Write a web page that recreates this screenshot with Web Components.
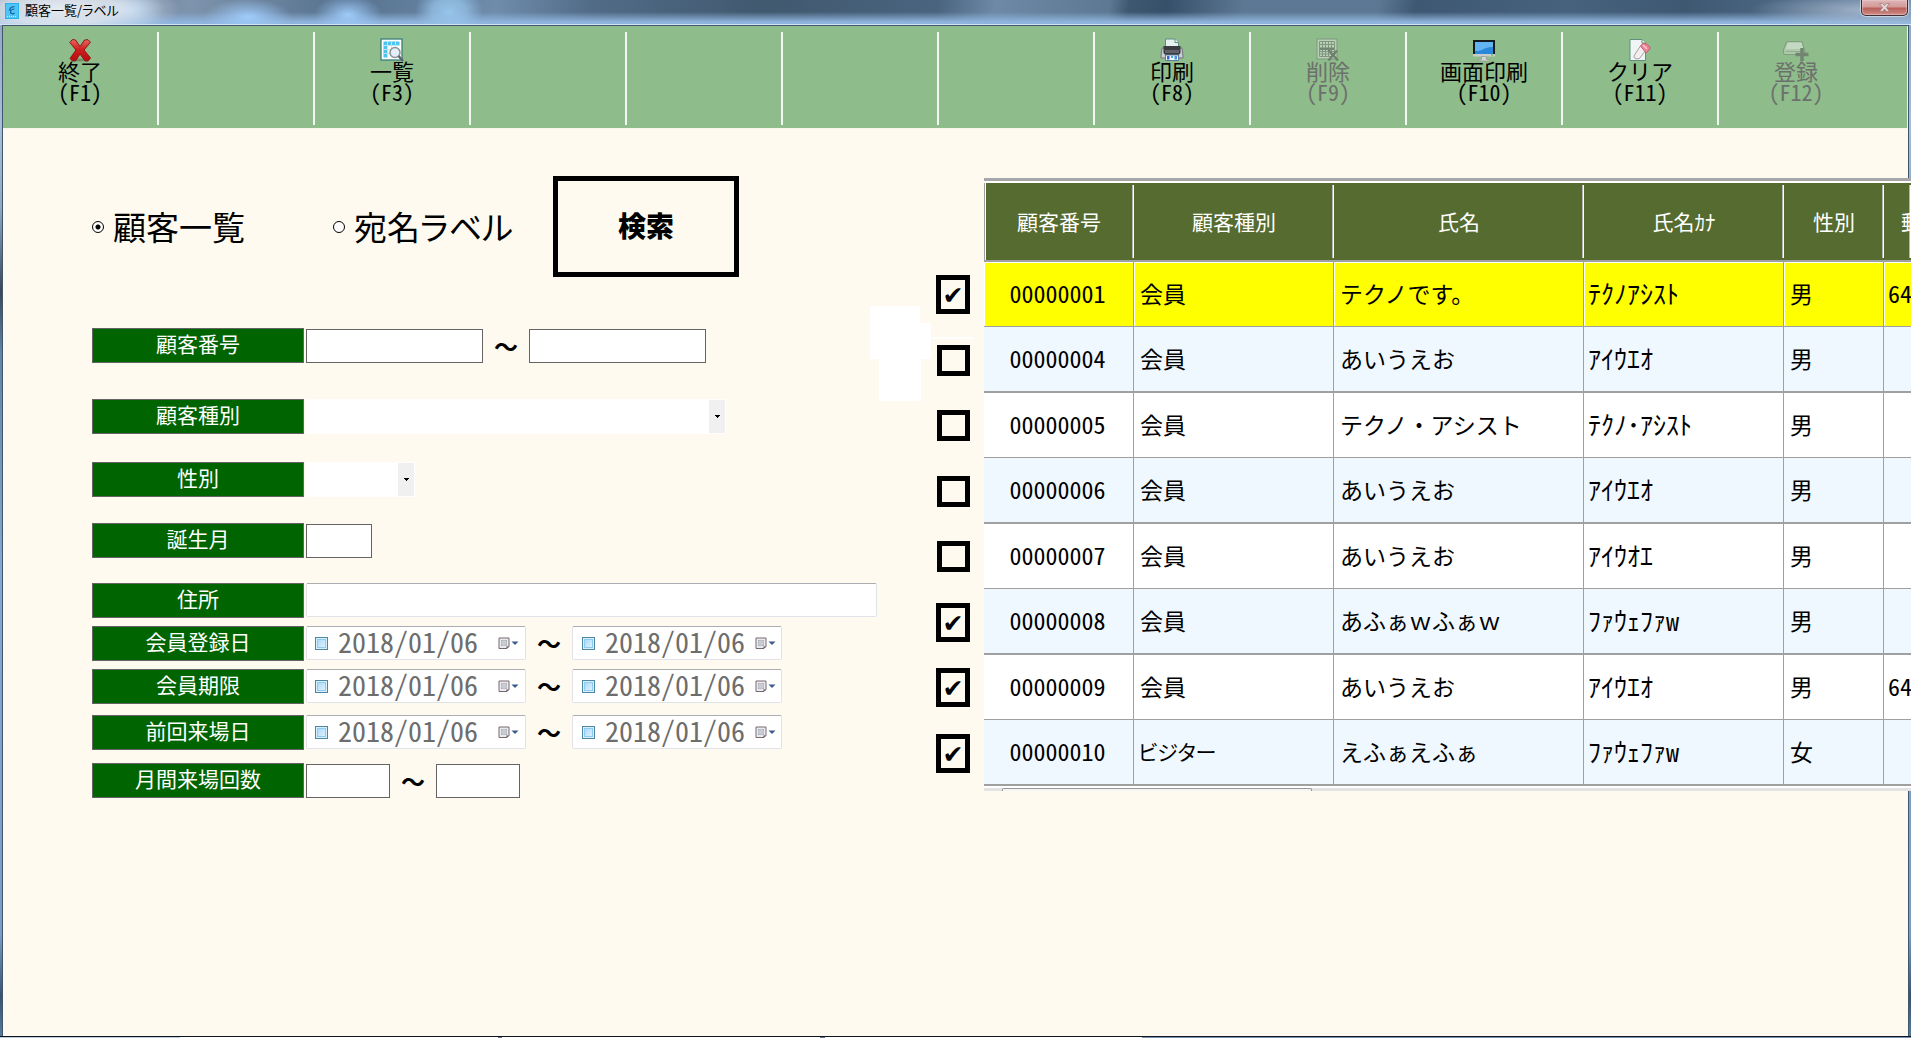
<!DOCTYPE html>
<html lang="ja">
<head>
<meta charset="utf-8">
<title>顧客一覧/ラベル</title>
<style>
html, body { margin: 0; height: 100%; overflow: hidden; }
body { font-family: "Noto Sans CJK JP", "Liberation Sans", sans-serif; color: #000; }
</style>
</head>
<body>
<app-window caption="顧客一覧/ラベル">
  <tool-bar slot="toolbar">
    <tool-button icon="exit" key="F1">終了</tool-button>
    <tool-button></tool-button>
    <tool-button icon="list" key="F3">一覧</tool-button>
    <tool-button></tool-button>
    <tool-button></tool-button>
    <tool-button></tool-button>
    <tool-button></tool-button>
    <tool-button icon="print" key="F8">印刷</tool-button>
    <tool-button icon="delete" key="F9" disabled>削除</tool-button>
    <tool-button icon="screen" key="F10">画面印刷</tool-button>
    <tool-button icon="clear" key="F11">クリア</tool-button>
    <tool-button icon="save" key="F12" disabled>登録</tool-button>
  </tool-bar>
  <search-form></search-form>
  <row-picker></row-picker>
  <customer-grid></customer-grid>
</app-window>

<script>
class BaseElement extends HTMLElement {
  render(html, options = {}) {
    const root = this.attachShadow({ mode: 'open', ...options });
    const t = document.createElement('template');
    t.innerHTML = html;
    root.appendChild(t.content.cloneNode(true));
    return root;
  }
}

const ICONS = {
  exit: `<svg width="24" height="24" viewBox="0 0 24 24"><defs><linearGradient id="g" x1="0" y1="0" x2="0" y2="1"><stop offset="0" stop-color="#e86a62"/><stop offset=".45" stop-color="#d01f1f"/><stop offset="1" stop-color="#b80d10"/></linearGradient></defs><ellipse cx="12" cy="22" rx="9" ry="1.5" fill="#4d6b4a" opacity=".5"/><path d="M4.500 1.500 7.500 2l4.500 6.500L16.500 2l3.500-.3 2.500 2.500-6.500 7.800 6.500 8-2.500 3h-3L12 16l-4.500 7H4.500L2 20.500 8 12 1.800 4.500z" fill="url(#g)" stroke="#8f1515" stroke-width="1" stroke-linejoin="round"/></svg>`,
  list: `<svg width="24" height="24" viewBox="0 0 24 24"><rect x="1" y="1" width="21" height="21" fill="#fdfefe" stroke="#3d7f78" stroke-width="1.300"/><path d="M3.500 3.500h16v4h-12v12h-4z" fill="#4cc4f2"/><path d="M7.500 7.500h12v12h-12z" fill="#fff"/><path d="M3.500 7.500h16M3.500 11.500h16M3.500 15.500h16M7.500 3.500v16M11.500 3.500v16M15.500 3.500v16" stroke="#bfe6ee" stroke-width="1"/><circle cx="15" cy="14.500" r="5" fill="#e3eef8" fill-opacity=".9" stroke="#8d9399" stroke-width="1.500"/><path d="m18.500 18 4.500 5" stroke="#5d646b" stroke-width="2.400"/></svg>`,
  print: `<svg width="24" height="24" viewBox="0 0 24 24"><path d="M5.500 1h9.500l3.500 3.500V10h-13z" fill="#e6f1ef" stroke="#5f8a80"/><path d="M15 1v3.500h3.500" fill="#fff" stroke="#5f8a80"/><path d="M2 10h20l1 8v2H1v-2z" fill="#c9cdd3" stroke="#70757c"/><path d="M3.500 8h17v7l-2 2h-13l-2-2z" fill="#3b3b40"/><path d="M5 12h14v3H5z" fill="#626269"/><path d="M5.500 17h13v5.500h-13z" fill="#f6f9fe" stroke="#597d9d"/><path d="M7 18h2.500v3.500H7z" fill="#3565c8"/><path d="M11 18h2v2h-2z" fill="#35b5d0"/><path d="M14.500 18H17v3.500h-2.500z" fill="#4b8ee8"/></svg>`,
  delete: `<svg width="24" height="24" viewBox="0 0 24 24"><rect x="1" y="1" width="20" height="20" fill="#b8d0b6" stroke="#82a081" stroke-width="1.200"/><path d="M3.500 3.500h15v15h-15zM3.500 6.500h15M3.500 13.500h15M3.500 16h15M6.500 3.500v15M9.500 3.500v15M12.500 3.500v15M15.500 3.500v15" stroke="#81967f" fill="none"/><path d="M4 9.500h14v2.500H4z" fill="#748673"/><path d="m12.500 12 9.500 10.500M21 12.500l-8.500 10" stroke="#6d806c" stroke-width="2.400"/></svg>`,
  screen: `<svg width="24" height="24" viewBox="0 0 24 24"><rect x="1" y="2" width="22" height="16" fill="#151a1d"/><rect x="3" y="4" width="18" height="12" fill="#2789d8"/><path d="M3 4h18v5C14 8 9 14 3 13z" fill="#62b5f0"/><path d="M1 16h22v2.500H1z" fill="#c7cdca"/><path d="M19 16.500h2v1h-2z" fill="#39c52e"/><path d="M9.500 18.500h5v3h3v1.500h-11v-1.500h3z" fill="#d3d6d6" stroke="#8a9090" stroke-width=".6"/></svg>`,
  clear: `<svg width="24" height="24" viewBox="0 0 24 24"><path d="M2 1.500h12l3.500 3.500v17.500H2z" fill="#eef5f4" stroke="#5c8f7e"/><path d="M14 1.500V5h3.500" fill="#fff" stroke="#5c8f7e"/><path d="m6.500 17 6-9 5 4.500-6 8q-3 1-5-.5-1-1.500 0-3z" fill="#f3eef0" stroke="#99888e" stroke-width=".8"/><path d="m12.500 8 2-2.500q4-1 7.500 3.500v2l-4 4z" fill="#ee8296" stroke="#b95469" stroke-width=".8"/><path d="m15 7 4 4" stroke="#fbc6ce" stroke-width="1.500"/></svg>`,
  save: `<svg width="28" height="24" viewBox="0 0 28 24"><path d="M5 3.500h15l2.500 8V15q-.5 1.500-2 1.500H3Q1.500 16.500 1.500 15v-3.500z" fill="#afc9ad" stroke="#82a081" stroke-width="1.200"/><path d="M5.500 5h14l1.500 6H3.500z" fill="#c3d9c1"/><path d="M3.500 13.500h17" stroke="#8fae8d"/><path d="M20 10v13M13.500 16.500h13" stroke="#728571" stroke-width="3.500"/></svg>`
};

class AppWindow extends BaseElement {
  connectedCallback() {
    this.render(`
      <style>
        :host { display: flex; flex-direction: column; height: 100vh;
          background: linear-gradient(#8ea3bd 0%, #a9bfd6 12%, #93a9c2 20%, #3a4756 28%, #6484a4 34%, #86a8cc 55%, #7c9cc2 90%, #38536f 96%, #5b7c9c); }
        header { display: flex; align-items: flex-start; height: 24px; border-bottom: 1px solid #d3e4f3; box-sizing: content-box;
          background:
            radial-gradient(120px 30px at 60px 9px, #e6ebf1, #e6ebf1cc 50%, #e6ebf100),
            radial-gradient(34px 20px at 130px 10px, #9dc6f0, #9dc6f000),
            radial-gradient(44px 18px at 248px 17px, #9fcbfa, #9fcbfa00),
            radial-gradient(34px 20px at 348px 15px, #9fcbfa, #9fcbfa00),
            radial-gradient(34px 26px at 449px 12px, #97c3ea, #97c3eabb 50%, #97c3ea00),
            radial-gradient(120px 18px at 1870px 10px, #b5c5dacc, #b5c5da00),
            linear-gradient(#8fb4dd00 50%, #8fb4dd 92%),
            linear-gradient(100deg, #5b7592 0%, #7e93ac 10%, #56728f 18%, #6f8cab 26%, #516b87 31%, #41596f 40%, #4a647f 49%, #6d89a6 52%, #5c7892 58%, #3f5870 59%, #37506a 61%, #5d7894 65%, #5d7894 72%, #3e5873 74%, #47627d 82%, #3e5872 88%, #607c9a); }
        .logo { display: block; margin: 3px 6px 0 5px; }
        h1 { margin: 0; font-size: 13px; line-height: 20px; font-weight: 400; font-feature-settings: "palt"; }
        .close { margin: 0 3px 0 auto; width: 47px; height: 16px; padding: 0; display: grid; place-items: center;
          border: 1px solid #3f2d38; border-top: 0; border-radius: 0 0 5px 5px;
          background: linear-gradient(#dcb4b6, #d49a98 45%, #b9615b 55%, #cf8a85); box-shadow: 0 0 0 1px #dce6f0aa, inset 0 0 1px 1px #f1cfcd88; }
        .body { flex: 1; min-height: 0; margin: 0 2px; display: flex; flex-direction: column; border: solid #40566f; border-width: 1px 1px 0; background: #fffaef; }
        .bar { border-bottom: 1px solid #f7f6ee; }
        main { flex: 1; min-height: 0; display: flex; align-items: flex-start; }
        footer { height: 1px; border-top: 1px solid #10141c; background: linear-gradient(90deg, #b9cde5 180px, #fff 180px 498px, #66738a 498px 502px, #fff 502px 820px, #66738a 820px 825px, #fff 825px 1142px, #7492b5 1142px); }
      </style>
      <header>
        <svg class="logo" width="14" height="16" viewBox="0 0 14 16"><rect width="14" height="16" fill="#29b2ee"/><rect x="1" y="1" width="12" height="14" fill="#4ec5f5"/><path d="M9.500 3.500 6 4.500 4.500 7 6 7.500 5.500 10l2.500 1 1.500-1M6.500 6.500l3-.5" fill="none" stroke="#175f9f" stroke-width="1.200"/><path d="M2 13.500h10" stroke="#c7efff" stroke-dasharray="1 1"/></svg>
        <h1></h1>
        <button class="close" aria-label="閉じる"><svg width="11" height="9" viewBox="0 0 11 9"><path d="M.5.5h3l2 2.300L7.500.5h3L7.300 4.500l3.200 4h-3l-2-2.500-2 2.500h-3l3.200-4z" fill="#e6dcdc" stroke="#9c7578" stroke-width=".7"/></svg></button>
      </header>
      <div class="body">
        <div class="bar"><slot name="toolbar"></slot></div>
        <main><slot></slot></main>
      </div>
      <footer></footer>
    `).querySelector('h1').textContent = this.getAttribute('caption');
  }
}

class ToolBar extends BaseElement {
  connectedCallback() {
    this.render(`
      <style>
        :host { display: grid; height: 102px; background: #8fbc8b; border-right: 1px solid #eef4ec;
          grid-template-columns: repeat(12, minmax(0, 156fr)) 32fr; }
      </style><slot></slot>`);
  }
}

class ToolButton extends BaseElement {
  connectedCallback() {
    const icon = this.getAttribute('icon'), key = this.getAttribute('key');
    const off = this.hasAttribute('disabled') ? 'disabled' : '';
    this.render(`
      <style>
        :host { display: block; padding: 6px 0 3px; }
        :host(:last-child) button { border-right-color: transparent; }
        button { display: flex; flex-direction: column; align-items: center; width: 100%; height: 93px; padding: 6px 0 0;
          border: 0; border-right: 2px solid #f4f7f3; background: none; font: 22px/21px "Noto Sans CJK JP", sans-serif; color: #000; }
        button:disabled { color: #6c706c; }
        svg { display: block; margin-bottom: -2px; }
        .key { font-feature-settings: "hwid"; }
      </style>
      <button ${off} ${icon ? '' : 'aria-label="未使用"'}>${icon ? ICONS[icon] : ''}<slot></slot>${key ? `<span class="key">(${key})</span>` : ''}</button>`);
  }
}

class DateField extends BaseElement {
  static formAssociated = true;
  connectedCallback() {
    this.render(`
      <style>
        :host { display: flex; align-items: center; box-sizing: border-box; height: 34px; width: 220px; padding: 0 5px 0 8px;
          background: #fff; border: 1px solid #e2e3ea; border-top-color: #abadb3; border-radius: 2px; }
        :host([compact]) { width: 210px; padding-left: 9px; }
        :host([compact]) .date { width: 150px; }
        .on { appearance: none; flex: none; width: 13px; height: 13px; margin: 0 10px 0 0; border: 1px solid #4b86a5;
          background: linear-gradient(135deg, #9fd4f8, #eaf7ff); box-shadow: inset 0 0 0 1px #d9eff9, inset 0 0 0 2px #8fcbf0; }
        .date { flex: none; width: 160px; height: 32px; box-sizing: border-box; padding: 0 0 4px; border: 0; background: none; outline: none; color: #6d6d6d;
          font: 28px/28px "Noto Sans CJK JP", sans-serif; font-feature-settings: "hwid"; }
        button { flex: none; padding: 0; border: 0; background: none; line-height: 0; }
      </style>
      <input class="on" type="checkbox" aria-label="日付を使う">
      <input class="date" type="text" value="2018/01/06" aria-label="日付">
      <button aria-label="カレンダー"><svg width="21" height="13" viewBox="0 0 21 13"><path d="M1 1h10v8.500L9 11.500H1z" fill="#eceaf0" stroke="#75696f"/><path d="M3 3h6v6H3z" fill="#a9adb6"/><path d="M3 5h6M3 7h6M5 3v6M7 3v6" stroke="#f4f4f8" stroke-width=".5"/><path d="M8.500 11.500V9.500h2.500z" fill="#4d4348"/><path d="M13.500 4.500h7L17 8z" fill="#3d5a8c"/></svg></button>
    `, { delegatesFocus: true });
  }
}

class FieldRow extends BaseElement {
  connectedCallback() {
    this.render(`
      <style>
        :host { display: flex; align-items: flex-start; gap: 2px; }
        .caption { flex: none; box-sizing: border-box; width: 212px; height: 35px; border: 1px solid #646464; background: #006400;
          color: #fff; font-size: 21px; line-height: 29px; text-align: center; }
        .controls { flex: 1; min-width: 0; display: flex; align-items: center; }
      </style>
      <div class="caption"><slot name="caption"></slot></div>
      <div class="controls"><slot></slot></div>`);
  }
}

class SearchForm extends BaseElement {
  connectedCallback() {
    this.render(`
      <style>
        :host { display: block; flex: none; width: 778px; padding: 47px 0 0 89px; }
        .top { display: flex; align-items: center; height: 101px; margin-bottom: 51px; }
        .option { display: flex; align-items: center; gap: 9px; width: 241px; font-size: 33px; line-height: 40px; font-feature-settings: "palt"; }
        .option + .option { width: 220px; }
        .option span { padding-bottom: 2px; }
        .option input { appearance: none; flex: none; width: 12px; height: 12px; margin: 0; border: 1px solid #000; border-radius: 50%; background: #fff; }
        .option input:checked { background: radial-gradient(circle, #000 2px, #fff 3px); }
        .search { width: 186px; height: 101px; border: 5px solid #000; background: none; padding: 0 0 4px; color: #000;
          font: 28px/40px "Noto Sans CJK JP", sans-serif; font-weight: 900; }
        .rows { display: grid; grid-template-rows: 71px 63px 61px 60px 43px 43px 46px 48px 35px; }
        input.box { box-sizing: border-box; height: 34px; margin: 1px 0 0; padding: 0 4px; border: 1px solid #646464; background: #fff; font: inherit; font-size: 22px; }
        .id { width: 177px; } .month { width: 66px; } .count { width: 84px; }
        input.address { width: 571px; margin: 0; border-color: #abadb3 #e2e3ea #e2e3ea; border-radius: 2px; }
        select { appearance: none; box-sizing: border-box; height: 35px; border: 1px solid #fffefb; border-radius: 0; font: inherit; font-size: 22px; padding: 0 20px 0 4px;
          background:
            linear-gradient(#000, #000) right 5px top 15px / 5px 1px no-repeat,
            linear-gradient(#000, #000) right 6px top 16px / 3px 1px no-repeat,
            linear-gradient(#000, #000) right 7px top 17px / 1px 1px no-repeat,
            linear-gradient(#f0f0f0, #f0f0f0) right / 16px 100% no-repeat, #fff; }
        .kind { width: 420px; } .sex { width: 109px; }
        .to { width: 46px; text-align: center; font-size: 24px; line-height: 34px; font-weight: 700; }
      </style>
      <div class="top">
        <label class="option"><input type="radio" name="mode" checked><span>顧客一覧</span></label>
        <label class="option"><input type="radio" name="mode"><span>宛名ラベル</span></label>
        <button class="search">検索</button>
      </div>
      <div class="rows">
        <field-row><label slot="caption" for="id-from">顧客番号</label><input class="box id" id="id-from"><span class="to">～</span><input class="box id" aria-label="顧客番号 終了"></field-row>
        <field-row><label slot="caption" for="kind">顧客種別</label><select class="kind" id="kind"><option></option></select></field-row>
        <field-row><label slot="caption" for="sex">性別</label><select class="sex" id="sex"><option></option></select></field-row>
        <field-row><label slot="caption" for="month">誕生月</label><input class="box month" id="month"></field-row>
        <field-row><label slot="caption" for="address">住所</label><input class="box address" id="address"></field-row>
        <field-row><label slot="caption" for="joined">会員登録日</label><date-field id="joined"></date-field><span class="to">～</span><date-field compact></date-field></field-row>
        <field-row><label slot="caption" for="limit">会員期限</label><date-field id="limit"></date-field><span class="to">～</span><date-field compact></date-field></field-row>
        <field-row><label slot="caption" for="visit">前回来場日</label><date-field id="visit"></date-field><span class="to">～</span><date-field compact></date-field></field-row>
        <field-row><label slot="caption" for="count">月間来場回数</label><input class="box count" id="count"><span class="to">～</span><input class="box count" aria-label="月間来場回数 終了"></field-row>
      </div>`);
  }
}

class RowPicker extends BaseElement {
  connectedCallback() {
    const states = [1, 0, 0, 0, 0, 1, 1, 1];
    this.render(`
      <style>
        :host { flex: 1 0 114px; display: flex; justify-content: flex-end; }
        .paper { flex: none; margin-top: 177px; overflow: visible; }
        .picks { flex: none; width: 53px; padding-top: 133px; }
        .picks div { display: flex; align-items: center; justify-content: center; padding-right: 9px; height: 65px; }
        .picks div:nth-child(even) { height: 66px; }
        input { appearance: none; box-sizing: border-box; width: 33px; height: 31px; margin: 0; border: 5px solid #000; }
        input:checked { height: 39px; width: 34px; }
        input:checked::after { content: "✔"; display: block; font: 25px/31px "DejaVu Sans", sans-serif; text-align: center; margin: 0 -2px; }
      </style>
      <svg class="paper" width="61" height="95"><path d="M0 0h50v17h11v36H51v42H9V53H0z" fill="#fff"/><path d="M62 31h42v2H62z" fill="#fff"/></svg>
      <div class="picks">${states.map((s, i) => `<div><input type="checkbox" aria-label="${i + 1}行目" ${s ? 'checked' : ''}></div>`).join('')}</div>`);
  }
}

class CustomerGrid extends BaseElement {
  connectedCallback() {
    const rows = [
      ['00000001', '会員', 'テクノです。', 'ﾃｸﾉｱｼｽﾄ', '男', '64'],
      ['00000004', '会員', 'あいうえお', 'ｱｲｳｴｵ', '男', ''],
      ['00000005', '会員', 'テクノ・アシスト', 'ﾃｸﾉ･ｱｼｽﾄ', '男', ''],
      ['00000006', '会員', 'あいうえお', 'ｱｲｳｴｵ', '男', ''],
      ['00000007', '会員', 'あいうえお', 'ｱｲｳｵｴ', '男', ''],
      ['00000008', '会員', 'あふぁｗふぁｗ', 'ﾌｧｳｪﾌｧw', '男', ''],
      ['00000009', '会員', 'あいうえお', 'ｱｲｳｴｵ', '男', '64'],
      ['00000010', 'ビジター', 'えふぁえふぁ', 'ﾌｧｳｪﾌｧw', '女', '']
    ];
    this.render(`
      <style>
        :host { display: block; flex: 0 0 927px; margin: 49px -3px 0 0; position: relative; z-index: 1; overflow: hidden; border-top: 3px solid #a7a7a9; }
        table { width: 100%; table-layout: fixed; border-collapse: separate; border-spacing: 0; font-size: 23px; line-height: 30px; }
        th, td { box-sizing: border-box; padding: 0; white-space: nowrap; overflow: hidden; }
        th { height: 81px; border-top: 2px solid #fff; border-bottom: 2px solid #a0a0a0; color: #fff; font-size: 21px; font-weight: 400; padding-bottom: 2px;
          background: linear-gradient(90deg, #b5b5b5 50%, #fff 50%) right top 2px / 2px 73px no-repeat, #556b2f; }
        th:first-child { box-shadow: inset 1px 0 #a0a0a0, inset 2px 0 #fff; }
        th:last-child { text-align: left; padding-left: 17px; }
        td { height: 65px; padding: 0 0 2px 6px; border: solid #a0a0a0; border-width: 0 1px 1px 0; background: #fff; }
        tr:nth-child(even) td { height: 66px; border-bottom-width: 2px; background: #f0f8ff; }
        tr.current td { background: #ff0; box-shadow: inset 1px 1px #fff; }
        td.id { padding-left: 0; padding-right: 2px; text-align: center; font-size: 24px; font-feature-settings: "hwid"; }
        td.kana, td.zip { padding-left: 4px; font-size: 24px; font-feature-settings: "hwid"; }
        td.kana { font-size: 26px; }
        td.zip { border-right: 0; }
        td.tight { font-size: 21px; font-feature-settings: "palt"; padding-left: 4px; }
        .foot { background: #fff; padding-top: 2px; }
        .scroll { height: 3px; background: #e3e3e3; }
        .thumb { width: 310px; height: 3px; margin-left: 18px; box-sizing: border-box; border: 1px solid #979797; border-bottom: 0; border-radius: 2px 2px 0 0; background: #f5f5f5; }
      </style>
      <table>
        <colgroup><col style="width:150px"><col style="width:200px"><col style="width:250px"><col style="width:200px"><col style="width:100px"><col></colgroup>
        <thead><tr><th>顧客番号</th><th>顧客種別</th><th>氏名</th><th>氏名ｶﾅ</th><th>性別</th><th>郵</th></tr></thead>
        <tbody>${rows.map((r, i) => `<tr${i ? '' : ' class="current"'}><td class="id">${r[0]}</td><td${r[1].length > 2 ? ' class="tight"' : ''}>${r[1]}</td><td>${r[2]}</td><td class="kana">${r[3]}</td><td>${r[4]}</td><td class="zip">${r[5]}</td></tr>`).join('')}</tbody>
      </table>
      <div class="foot"><div class="scroll"><div class="thumb"></div></div></div>`);
  }
}

customElements.define('app-window', AppWindow);
customElements.define('tool-bar', ToolBar);
customElements.define('tool-button', ToolButton);
customElements.define('date-field', DateField);
customElements.define('field-row', FieldRow);
customElements.define('search-form', SearchForm);
customElements.define('row-picker', RowPicker);
customElements.define('customer-grid', CustomerGrid);
</script>
</body>
</html>
